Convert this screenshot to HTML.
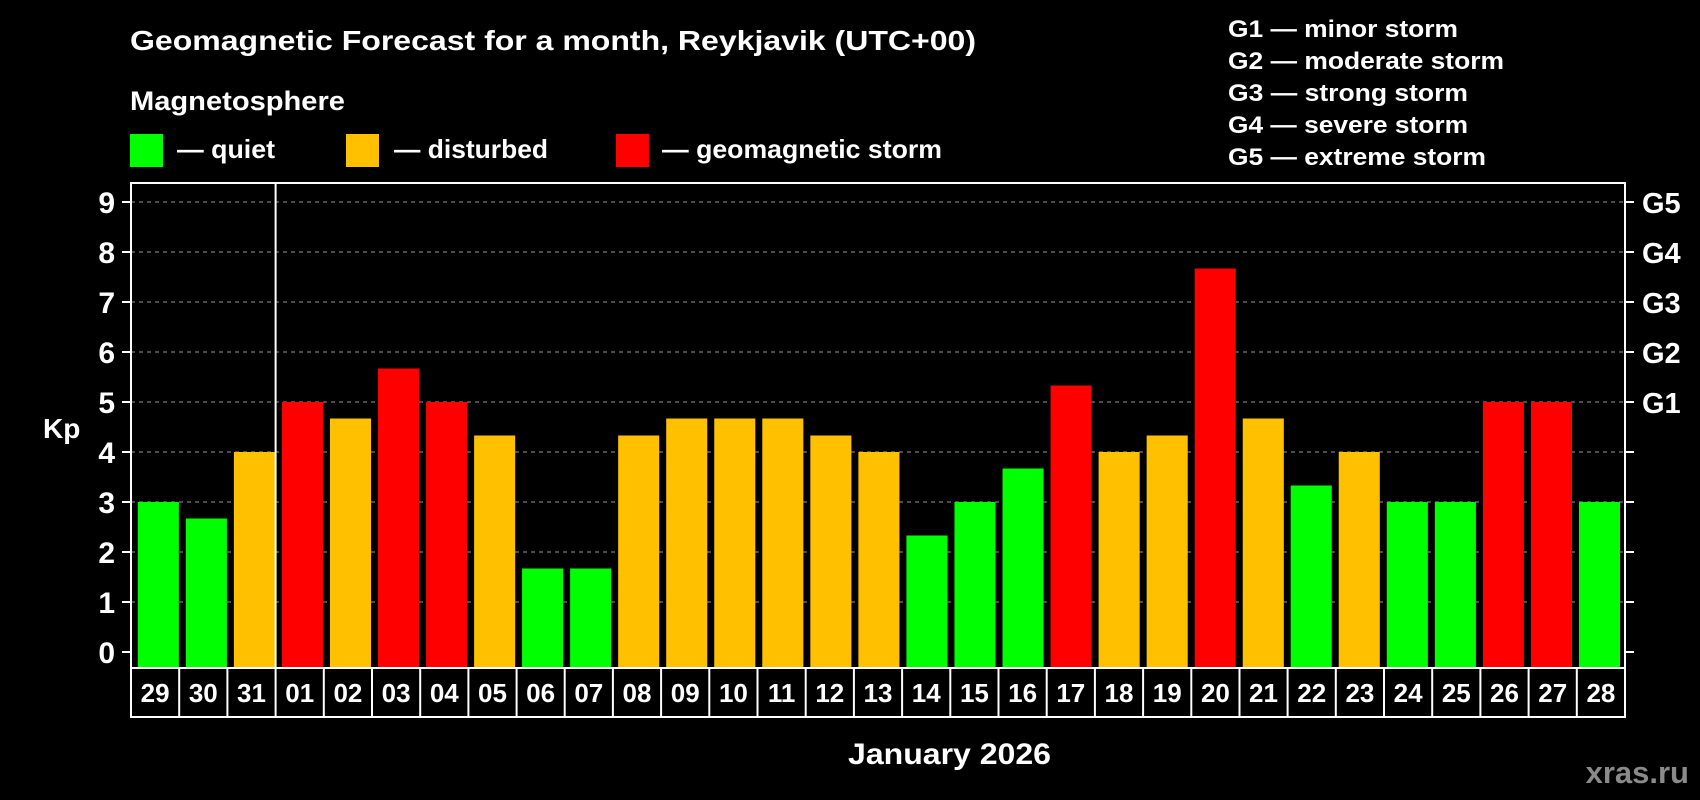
<!DOCTYPE html>
<html><head><meta charset="utf-8"><style>
html,body{margin:0;padding:0;background:#000;width:1700px;height:800px;overflow:hidden}
svg{display:block}
text{font-family:"Liberation Sans",Arial,sans-serif;font-weight:bold;fill:#fff}
.g{fill:#00ff00}.o{fill:#ffc000}.r{fill:#ff0000}
.grid line{stroke:#999;stroke-width:1;stroke-dasharray:4,4}
.tk line{stroke:#fff;stroke-width:2}
</style></head><body>
<svg width="1700" height="800" viewBox="0 0 1700 800">
<text x="130" y="50" font-size="28" textLength="846" lengthAdjust="spacingAndGlyphs">Geomagnetic Forecast for a month, Reykjavik (UTC+00)</text>
<text x="130" y="110" font-size="27" textLength="215" lengthAdjust="spacingAndGlyphs">Magnetosphere</text>
<rect x="130" y="134" width="33" height="33" class="g"/>
<text x="177" y="158" font-size="26" textLength="98" lengthAdjust="spacingAndGlyphs">— quiet</text>
<rect x="346" y="134" width="33" height="33" class="o"/>
<text x="394" y="158" font-size="26" textLength="154" lengthAdjust="spacingAndGlyphs">— disturbed</text>
<rect x="616" y="134" width="33" height="33" class="r"/>
<text x="662" y="158" font-size="26" textLength="280" lengthAdjust="spacingAndGlyphs">— geomagnetic storm</text>
<g font-size="24">
<text x="1228" y="37" textLength="230" lengthAdjust="spacingAndGlyphs">G1 — minor storm</text>
<text x="1228" y="69" textLength="276" lengthAdjust="spacingAndGlyphs">G2 — moderate storm</text>
<text x="1228" y="101" textLength="240" lengthAdjust="spacingAndGlyphs">G3 — strong storm</text>
<text x="1228" y="133" textLength="240" lengthAdjust="spacingAndGlyphs">G4 — severe storm</text>
<text x="1228" y="165" textLength="258" lengthAdjust="spacingAndGlyphs">G5 — extreme storm</text>
</g>

<g class="grid">
<line x1="131" y1="602" x2="1625" y2="602"/><line x1="131" y1="552" x2="1625" y2="552"/>
<line x1="131" y1="502" x2="1625" y2="502"/><line x1="131" y1="452" x2="1625" y2="452"/>
<line x1="131" y1="402" x2="1625" y2="402"/><line x1="131" y1="352" x2="1625" y2="352"/>
<line x1="131" y1="302" x2="1625" y2="302"/><line x1="131" y1="252" x2="1625" y2="252"/>
<line x1="131" y1="202" x2="1625" y2="202"/>
</g>
<g class="tk">
<line x1="122" y1="652" x2="131" y2="652"/><line x1="1625" y1="652" x2="1634" y2="652"/>
<line x1="122" y1="602" x2="131" y2="602"/><line x1="1625" y1="602" x2="1634" y2="602"/>
<line x1="122" y1="552" x2="131" y2="552"/><line x1="1625" y1="552" x2="1634" y2="552"/>
<line x1="122" y1="502" x2="131" y2="502"/><line x1="1625" y1="502" x2="1634" y2="502"/>
<line x1="122" y1="452" x2="131" y2="452"/><line x1="1625" y1="452" x2="1634" y2="452"/>
<line x1="122" y1="402" x2="131" y2="402"/><line x1="1625" y1="402" x2="1634" y2="402"/>
<line x1="122" y1="352" x2="131" y2="352"/><line x1="1625" y1="352" x2="1634" y2="352"/>
<line x1="122" y1="302" x2="131" y2="302"/><line x1="1625" y1="302" x2="1634" y2="302"/>
<line x1="122" y1="252" x2="131" y2="252"/><line x1="1625" y1="252" x2="1634" y2="252"/>
<line x1="122" y1="202" x2="131" y2="202"/><line x1="1625" y1="202" x2="1634" y2="202"/>
</g>
<g font-size="30" text-anchor="end">
<text x="115" y="663">0</text><text x="115" y="613">1</text><text x="115" y="563">2</text>
<text x="115" y="513">3</text><text x="115" y="463">4</text><text x="115" y="413">5</text>
<text x="115" y="363">6</text><text x="115" y="313">7</text><text x="115" y="263">8</text>
<text x="115" y="213">9</text>
</g>
<g font-size="29">
<text x="1642" y="413">G1</text><text x="1642" y="363">G2</text><text x="1642" y="313">G3</text>
<text x="1642" y="263">G4</text><text x="1642" y="213">G5</text>
</g>

<g transform="matrix(0.9968 0 0 1 0.24 0)">
<g transform="translate(3.5,0)">
<rect x="134.5" y="502" width="41.2" height="166" class="g"/>
<rect x="182.7" y="518.5" width="41.2" height="149.5" class="g"/>
<rect x="230.9" y="452" width="41.2" height="216" class="o"/>
<rect x="279.1" y="402" width="41.2" height="266" class="r"/>
<rect x="327.3" y="418.5" width="41.2" height="249.5" class="o"/>
<rect x="375.5" y="368.5" width="41.2" height="299.5" class="r"/>
<rect x="423.7" y="402" width="41.2" height="266" class="r"/>
<rect x="471.9" y="435.5" width="41.2" height="232.5" class="o"/>
<rect x="520.0" y="568.5" width="41.2" height="99.5" class="g"/>
<rect x="568.2" y="568.5" width="41.2" height="99.5" class="g"/>
<rect x="616.4" y="435.5" width="41.2" height="232.5" class="o"/>
<rect x="664.6" y="418.5" width="41.2" height="249.5" class="o"/>
<rect x="712.8" y="418.5" width="41.2" height="249.5" class="o"/>
<rect x="761.0" y="418.5" width="41.2" height="249.5" class="o"/>
<rect x="809.2" y="435.5" width="41.2" height="232.5" class="o"/>
<rect x="857.4" y="452" width="41.2" height="216" class="o"/>
<rect x="905.6" y="535.5" width="41.2" height="132.5" class="g"/>
<rect x="953.8" y="502" width="41.2" height="166" class="g"/>
<rect x="1002.0" y="468.5" width="41.2" height="199.5" class="g"/>
<rect x="1050.2" y="385.5" width="41.2" height="282.5" class="r"/>
<rect x="1098.4" y="452" width="41.2" height="216" class="o"/>
<rect x="1146.6" y="435.5" width="41.2" height="232.5" class="o"/>
<rect x="1194.8" y="268.5" width="41.2" height="399.5" class="r"/>
<rect x="1243.0" y="418.5" width="41.2" height="249.5" class="o"/>
<rect x="1291.1" y="485.5" width="41.2" height="182.5" class="g"/>
<rect x="1339.3" y="452" width="41.2" height="216" class="o"/>
<rect x="1387.5" y="502" width="41.2" height="166" class="g"/>
<rect x="1435.7" y="502" width="41.2" height="166" class="g"/>
<rect x="1483.9" y="402" width="41.2" height="266" class="r"/>
<rect x="1532.1" y="402" width="41.2" height="266" class="r"/>
<rect x="1580.3" y="502" width="41.2" height="166" class="g"/>
</g>
</g>

<g class="tk">
<line x1="179.2" y1="668" x2="179.2" y2="717"/><line x1="227.4" y1="668" x2="227.4" y2="717"/>
<line x1="275.6" y1="183" x2="275.6" y2="717"/><line x1="323.8" y1="668" x2="323.8" y2="717"/>
<line x1="372.0" y1="668" x2="372.0" y2="717"/><line x1="420.2" y1="668" x2="420.2" y2="717"/>
<line x1="468.4" y1="668" x2="468.4" y2="717"/><line x1="516.6" y1="668" x2="516.6" y2="717"/>
<line x1="564.7" y1="668" x2="564.7" y2="717"/><line x1="612.9" y1="668" x2="612.9" y2="717"/>
<line x1="661.1" y1="668" x2="661.1" y2="717"/><line x1="709.3" y1="668" x2="709.3" y2="717"/>
<line x1="757.5" y1="668" x2="757.5" y2="717"/><line x1="805.7" y1="668" x2="805.7" y2="717"/>
<line x1="853.9" y1="668" x2="853.9" y2="717"/><line x1="902.1" y1="668" x2="902.1" y2="717"/>
<line x1="950.3" y1="668" x2="950.3" y2="717"/><line x1="998.5" y1="668" x2="998.5" y2="717"/>
<line x1="1046.7" y1="668" x2="1046.7" y2="717"/><line x1="1094.9" y1="668" x2="1094.9" y2="717"/>
<line x1="1143.1" y1="668" x2="1143.1" y2="717"/><line x1="1191.3" y1="668" x2="1191.3" y2="717"/>
<line x1="1239.5" y1="668" x2="1239.5" y2="717"/><line x1="1287.6" y1="668" x2="1287.6" y2="717"/>
<line x1="1335.8" y1="668" x2="1335.8" y2="717"/><line x1="1384.0" y1="668" x2="1384.0" y2="717"/>
<line x1="1432.2" y1="668" x2="1432.2" y2="717"/><line x1="1480.4" y1="668" x2="1480.4" y2="717"/>
<line x1="1528.6" y1="668" x2="1528.6" y2="717"/><line x1="1576.8" y1="668" x2="1576.8" y2="717"/>
</g>
<rect x="131" y="183" width="1494" height="485" fill="none" stroke="#fff" stroke-width="2"/>
<rect x="131" y="668" width="1494" height="49" fill="none" stroke="#fff" stroke-width="2"/>

<g font-size="26" text-anchor="middle">
<text x="155.1" y="702">29</text><text x="203.3" y="702">30</text><text x="251.5" y="702">31</text>
<text x="299.7" y="702">01</text><text x="347.9" y="702">02</text><text x="396.1" y="702">03</text>
<text x="444.3" y="702">04</text><text x="492.5" y="702">05</text><text x="540.6" y="702">06</text>
<text x="588.8" y="702">07</text><text x="637.0" y="702">08</text><text x="685.2" y="702">09</text>
<text x="733.4" y="702">10</text><text x="781.6" y="702">11</text><text x="829.8" y="702">12</text>
<text x="878.0" y="702">13</text><text x="926.2" y="702">14</text><text x="974.4" y="702">15</text>
<text x="1022.6" y="702">16</text><text x="1070.8" y="702">17</text><text x="1119.0" y="702">18</text>
<text x="1167.2" y="702">19</text><text x="1215.4" y="702">20</text><text x="1263.5" y="702">21</text>
<text x="1311.7" y="702">22</text><text x="1359.9" y="702">23</text><text x="1408.1" y="702">24</text>
<text x="1456.3" y="702">25</text><text x="1504.5" y="702">26</text><text x="1552.7" y="702">27</text>
<text x="1600.9" y="702">28</text>
</g>

<text x="43" y="438" font-size="28">Kp</text>
<text x="848" y="764" font-size="30" textLength="203" lengthAdjust="spacingAndGlyphs">January 2026</text>
<text x="1689" y="783" font-size="31" text-anchor="end" style="fill:#8a8a8a">xras.ru</text>
</svg>
</body></html>
